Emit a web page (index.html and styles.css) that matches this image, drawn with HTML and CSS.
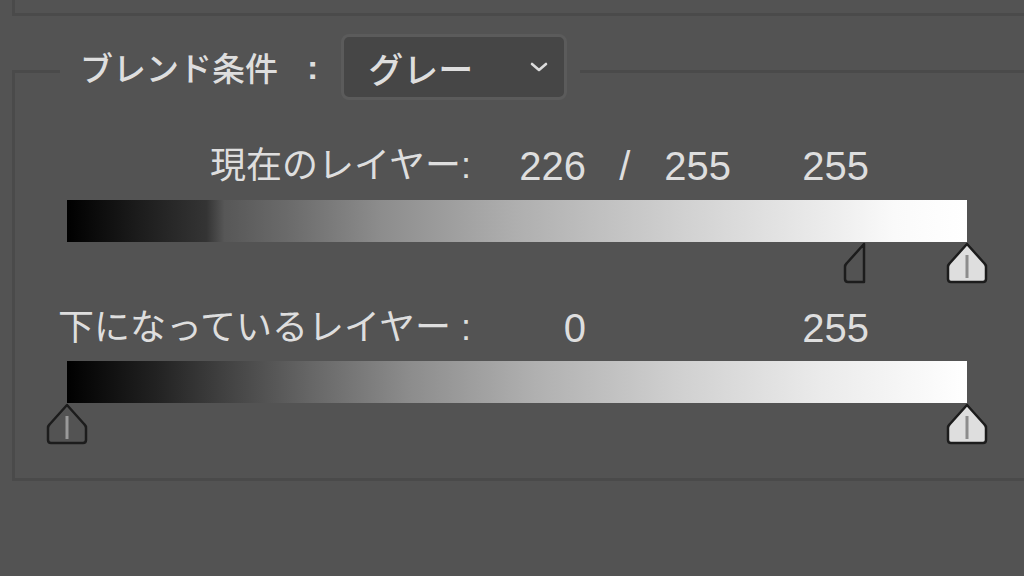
FILE: index.html
```html
<!DOCTYPE html>
<html lang="ja">
<head>
  <meta charset="UTF-8">
  <meta name="viewport" content="width=device-width, initial-scale=1.0">
  <title>ブレンド条件</title>
  <link rel="stylesheet" href="styles.css">
</head>
<body>
  <div class="top-panel"></div>

  <fieldset class="blend-if">
    <legend class="blend-legend">
      <span class="legend-label">ブレンド条件</span>
      <span class="legend-colon">:</span>
      <div class="select">
        <span class="select-value">グレー</span>
        <svg class="chevron" width="18" height="10" viewBox="0 0 18 10">
          <path d="M2 2 L9 8 L16 2" fill="none" stroke="#dcdcdc" stroke-width="2.6" stroke-linecap="round" stroke-linejoin="round"/>
        </svg>
      </div>
    </legend>

    <!-- This layer -->
    <div class="values">
      <span class="row-label">現在のレイヤー:</span>
      <span class="num">226</span>
      <span class="num pair"><span class="slash">/</span>255</span>
      <span class="num">255</span>
    </div>
    <div class="bar bar-current"></div>
    <div class="track">
      <svg class="thumb" style="left: 797px" width="42" height="42" viewBox="0 0 42 42">
        <path d="M21 2 L3.5 21.5 Q2 23 2 25 V37 Q2 40 5 40 H21 Z" fill="#535353" stroke="#1c1c1c" stroke-width="2.5" stroke-linejoin="round"/>
      </svg>
      <svg class="thumb" style="left: 900px" width="42" height="42" viewBox="0 0 42 42">
        <path d="M21 2 L38.5 21.5 Q40 23 40 25 V37 Q40 40 37 40 H5 Q2 40 2 37 V25 Q2 23 3.5 21.5 Z" fill="#dedede" stroke="#1c1c1c" stroke-width="2.5" stroke-linejoin="round"/>
        <line x1="21" y1="13" x2="21" y2="36" stroke="#8c8c8c" stroke-width="3"/>
      </svg>
    </div>

    <!-- Underlying layer -->
    <div class="values values-under">
      <span class="row-label">下になっているレイヤー :</span>
      <span class="num">0</span>
      <span class="num pair"></span>
      <span class="num">255</span>
    </div>
    <div class="bar bar-under"></div>
    <div class="track">
      <svg class="thumb" style="left: 0px" width="42" height="42" viewBox="0 0 42 42">
        <path d="M21 2 L38.5 21.5 Q40 23 40 25 V37 Q40 40 37 40 H5 Q2 40 2 37 V25 Q2 23 3.5 21.5 Z" fill="#535353" stroke="#1c1c1c" stroke-width="2.5" stroke-linejoin="round"/>
        <line x1="21" y1="13" x2="21" y2="36" stroke="#9a9a9a" stroke-width="3"/>
      </svg>
      <svg class="thumb" style="left: 900px" width="42" height="42" viewBox="0 0 42 42">
        <path d="M21 2 L38.5 21.5 Q40 23 40 25 V37 Q40 40 37 40 H5 Q2 40 2 37 V25 Q2 23 3.5 21.5 Z" fill="#dedede" stroke="#1c1c1c" stroke-width="2.5" stroke-linejoin="round"/>
        <line x1="21" y1="13" x2="21" y2="36" stroke="#8c8c8c" stroke-width="3"/>
      </svg>
    </div>
  </fieldset>
</body>
</html>
```

FILE: styles.css
```css
body {
  margin: 0;
  width: 1024px;
  height: 576px;
  overflow: hidden;
  background-color: #535353;
  color: #dedede;
  font-family: "Liberation Sans", "Noto Sans CJK JP", sans-serif;
}

.top-panel {
  height: 13px;
  margin-left: 12px;
  border-left: 3px solid #4a4a4a;
  border-bottom: 3px solid #4a4a4a;
}

.blend-if {
  margin: 18px -40px 0 12px;
  padding: 38px 0 33px 0;
  border: 3px solid #4a4a4a;
  border-right: none;
  min-width: 0;
}

.blend-legend {
  display: flex;
  align-items: center;
  margin-left: 45px;
  padding: 0 13px 8px 20px;
}

.legend-label {
  font-family: "Noto Sans CJK JP", sans-serif;
  font-size: 33px;
  font-weight: 500;
  line-height: 66px;
}

.legend-colon {
  font-size: 34px;
  font-weight: bold;
  margin: 0 23px 0 29px;
}

.select {
  display: flex;
  align-items: center;
  justify-content: space-between;
  box-sizing: border-box;
  width: 226px;
  height: 66px;
  padding: 0 16px 0 24px;
  background-color: #464646;
  border: 3px solid #5b5b5b;
  border-radius: 8px;
}

.select-value {
  font-family: "Noto Sans CJK JP", sans-serif;
  font-size: 35px;
  font-weight: 500;
}

/* Label and numbers row */
.values {
  display: grid;
  grid-template-columns: 456px 115px 145px 138px;
  justify-items: end;
  align-items: center;
  height: 40px;
  line-height: 40px;
}

.values-under {
  margin-top: 24px;
}

.row-label {
  font-size: 36px;
}

.num {
  font-size: 40px;
}

.slash {
  margin-right: 34px;
}

.bar {
  width: 900px;
  height: 42px;
  margin: 14px 0 0 52px;
}

.bar-current {
  background: linear-gradient(to right, #000 0%, #1c1c1c 8%, #343434 15.5%, #575757 17.5%, #6c6c6c 25%, #8d8d8d 35%, #afafaf 50%, #d0d0d0 68%, #ebebeb 84%, #fafafa 92%, #fff 100%);
}

.bar-under {
  margin-top: 13px;
  background: linear-gradient(to right, #000 0%, #222 10%, #3f3f3f 17%, #666 27%, #8c8c8c 38%, #b0b0b0 52%, #d0d0d0 68%, #ebebeb 84%, #fff 100%);
}

/* Slider handles sit under the bar at their values */
.track {
  position: relative;
  height: 42px;
  margin-left: 31px;
}

.thumb {
  position: absolute;
  top: 0;
}
```
